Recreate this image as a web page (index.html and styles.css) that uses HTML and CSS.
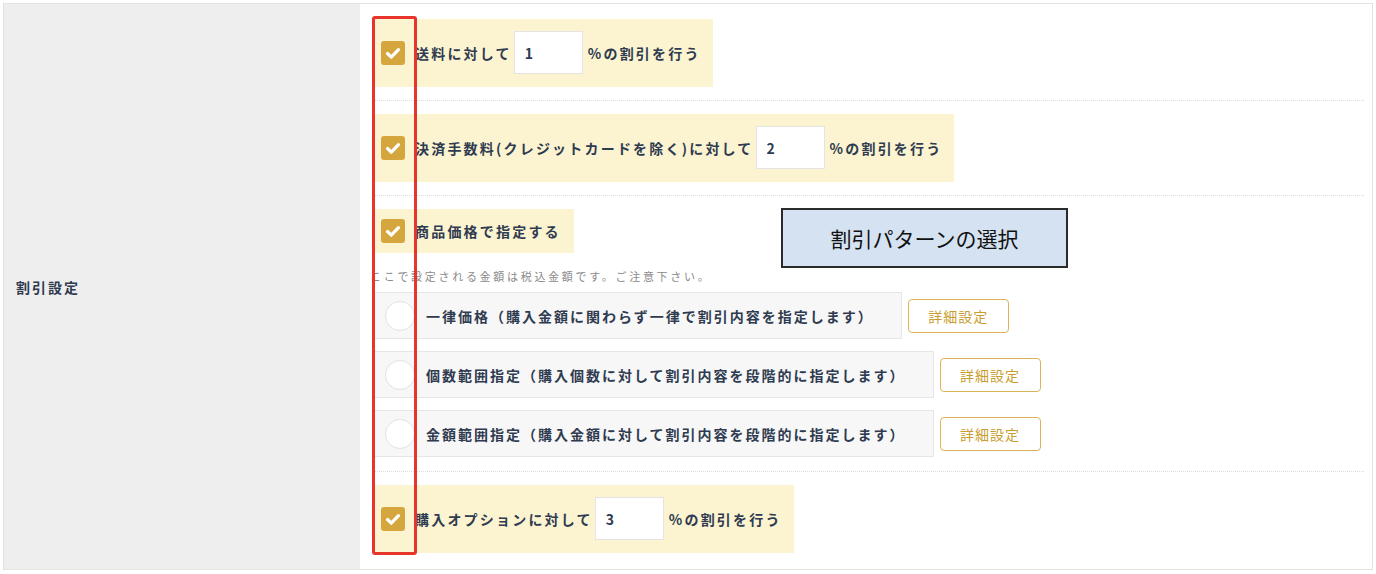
FILE: index.html
```html
<!DOCTYPE html>
<html lang="ja">
<head>
  <meta charset="UTF-8" />
  <meta name="viewport" content="width=device-width, initial-scale=1.0"/>
  <title>割引設定</title>
  <link rel="stylesheet" href="styles.css">
</head>
<body>
  <div class="settings">
    <div class="settings-label">割引設定</div>

    <div class="settings-body">
      <div class="opt-block">
        <label class="opt-check">
          <span class="checkbox"><svg viewBox="0 0 24 24"><path d="M6.5 12.5l3.8 3.7 7.2-7.6"/></svg></span>
          <span class="txt">送料に対して</span>
          <input class="rate" type="text" value="1">
          <span class="txt">%の割引を行う</span>
        </label>
      </div>

      <div class="opt-block">
        <label class="opt-check">
          <span class="checkbox"><svg viewBox="0 0 24 24"><path d="M6.5 12.5l3.8 3.7 7.2-7.6"/></svg></span>
          <span class="txt">決済手数料(クレジットカードを除く)に対して</span>
          <input class="rate" type="text" value="2">
          <span class="txt">%の割引を行う</span>
        </label>
      </div>

      <div class="opt-block patterns">
        <label class="opt-check short">
          <span class="checkbox"><svg viewBox="0 0 24 24"><path d="M6.5 12.5l3.8 3.7 7.2-7.6"/></svg></span>
          <span class="txt">商品価格で指定する</span>
        </label>
        <p class="note">ここで設定される金額は税込金額です。ご注意下さい。</p>

        <div class="pattern-row">
          <label class="radio-box"><span class="radio"></span><span class="txt">一律価格（購入金額に関わらず一律で割引内容を指定します）</span></label>
          <button class="detail-btn">詳細設定</button>
        </div>
        <div class="pattern-row">
          <label class="radio-box"><span class="radio"></span><span class="txt">個数範囲指定（購入個数に対して割引内容を段階的に指定します）</span></label>
          <button class="detail-btn">詳細設定</button>
        </div>
        <div class="pattern-row">
          <label class="radio-box"><span class="radio"></span><span class="txt">金額範囲指定（購入金額に対して割引内容を段階的に指定します）</span></label>
          <button class="detail-btn">詳細設定</button>
        </div>
      </div>

      <div class="opt-block">
        <label class="opt-check">
          <span class="checkbox"><svg viewBox="0 0 24 24"><path d="M6.5 12.5l3.8 3.7 7.2-7.6"/></svg></span>
          <span class="txt">購入オプションに対して</span>
          <input class="rate" type="text" value="3">
          <span class="txt">%の割引を行う</span>
        </label>
      </div>
    </div>
  </div>

  <!-- 注釈 -->
  <div class="mark-red"></div>
  <div class="mark-note">割引パターンの選択</div>
</body>
</html>
```

FILE: styles.css
```css
body {
  font-family: "Noto Sans CJK JP", "Noto Sans", sans-serif;
  background-color: #fff;
  color: #2f3b50;
  margin: 0;
  padding: 0;
  position: relative;
}

.settings {
  display: grid;
  grid-template-columns: 356px 1fr;
  margin: 3px 3px 0 3px;
  width: 1368px;
  border: 1px solid #e2e2e2;
}

.settings-label {
  background-color: #eeeeee;
  display: flex;
  align-items: center;
  padding-left: 12px;
  font-size: 14px;
  font-weight: bold;
  letter-spacing: 2px;
}

.settings-body {
  padding: 2px 8px 3px 12px;
}

.opt-block {
  padding: 13px 0;
  border-bottom: 1px dotted #dcdcdc;
}

.opt-block.patterns {
  padding-bottom: 14px;
}

.opt-block:last-child {
  border-bottom: none;
}

.opt-check {
  display: inline-flex;
  align-items: center;
  background-color: #fcf4d0;
  padding: 12px 12px 13px 9px;
  font-size: 14px;
  font-weight: bold;
  letter-spacing: 2.2px;
}

.opt-check.short {
  padding: 10px 13px 10px 9px;
}

.checkbox {
  width: 24px;
  height: 24px;
  border-radius: 3px;
  background-color: #d4a63d;
  margin-right: 10px;
  flex-shrink: 0;
}

.checkbox svg {
  display: block;
  width: 24px;
  height: 24px;
  fill: none;
  stroke: #fff;
  stroke-width: 3.2;
  stroke-linecap: round;
  stroke-linejoin: round;
}

.txt {
  white-space: nowrap;
}

.rate {
  width: 69px;
  height: 43px;
  box-sizing: border-box;
  margin: 0 5px 0 2px;
  padding: 0 0 0 10px;
  border: 1px solid #e4e4e4;
  background: #fff;
  font-family: inherit;
  font-size: 14px;
  font-weight: bold;
  color: #2f3b50;
  outline: none;
}

.note {
  margin: 14px 0 7px -2px;
  font-size: 11px;
  line-height: 18px;
  letter-spacing: 2.7px;
  color: #8a8a8a;
}

.pattern-row {
  display: flex;
  align-items: center;
  gap: 6px;
  margin-bottom: 12px;
}

.pattern-row:last-child {
  margin-bottom: 0;
}

.radio-box {
  display: inline-flex;
  align-items: center;
  height: 47px;
  box-sizing: border-box;
  padding: 0 27px 0 12px;
  background-color: #f7f7f7;
  border: 1px solid #e6e6e6;
  font-size: 14px;
  font-weight: bold;
  letter-spacing: 2px;
}

.radio {
  width: 28px;
  height: 28px;
  border-radius: 50%;
  background: #fff;
  border: 1px solid #e2e2e2;
  margin-right: 11px;
  flex-shrink: 0;
}

.detail-btn {
  width: 101px;
  height: 34px;
  border: 1px solid #dcb455;
  border-radius: 4px;
  background: #fff;
  color: #c99d2f;
  font-family: inherit;
  font-size: 14px;
  letter-spacing: 1px;
  cursor: pointer;
}

.mark-red {
  position: absolute;
  left: 372px;
  top: 16px;
  width: 45px;
  height: 539px;
  box-sizing: border-box;
  border: 3px solid #e8352b;
  border-radius: 3px;
}

.mark-note {
  position: absolute;
  left: 781px;
  top: 208px;
  width: 287px;
  height: 60px;
  box-sizing: border-box;
  border: 2px solid #2b2b2b;
  background-color: #d4e2f2;
  display: flex;
  align-items: center;
  justify-content: center;
  font-size: 21px;
  color: #111;
}
```
